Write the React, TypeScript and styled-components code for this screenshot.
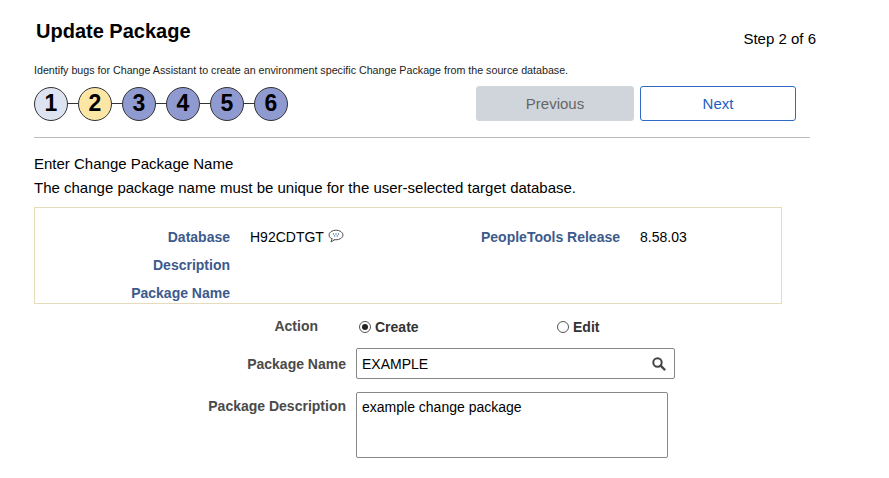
import React from "react";
import styled, { createGlobalStyle } from "styled-components";

const G = createGlobalStyle`
  body { margin: 0; font-family: Arial, "Liberation Sans", sans-serif; color: #000; background: #fff; }
`;
const Page = styled.div`width: 889px; height: 478px; position: relative; overflow: hidden;`;
const Header = styled.div`display: flex; justify-content: space-between; padding: 20px 0 0 36px; width: 780px;`;
const Title = styled.h1`margin: 0; font-size: 20px; font-weight: bold;`;
const StepText = styled.div`font-size: 15px; margin-top: 10px;`;
const Hint = styled.div`font-size: 10.7px; padding: 17px 0 0 34px; color: #222;`;
const NavRow = styled.div`display: flex; align-items: center; padding: 10px 0 0 34px; width: 762px;`;
const Steps = styled.div`display: flex; align-items: center; flex: 1;`;
const Circle = styled.div<{ $bg: string }>`
  width: 32px; height: 32px; border-radius: 50%; border: 1px solid #333; background: ${p => p.$bg};
  display: flex; align-items: center; justify-content: center; font-size: 23px; font-weight: bold;
`;
const Line = styled.div`width: 10px; height: 1px; background: #333;`;
const Btn = styled.button<{ $primary?: boolean }>`
  width: ${p => (p.$primary ? 156 : 158)}px; height: 35px; margin-left: ${p => (p.$primary ? 6 : 0)}px;
  font: 15px Arial, "Liberation Sans", sans-serif; border-radius: 3px;
  background: ${p => (p.$primary ? "#fff" : "#d0d5db")};
  color: ${p => (p.$primary ? "#1d5fc0" : "#666")};
  border: 1px solid ${p => (p.$primary ? "#2f6bc4" : "#d0d5db")};
`;
const Rule = styled.hr`margin: 16px 0 0 34px; width: 776px; border: 0; border-top: 1px solid #bbb;`;
const Para = styled.div`font-size: 15px; padding: 0 0 0 34px; line-height: 24px;`;
const Info = styled.div`margin: 7px 0 0 34px; width: 748px; height: 97px; border: 1px solid #e6dcbc; box-sizing: border-box;
  display: grid; grid-template-columns: 195px 230px 160px auto; grid-auto-rows: 28px; padding-top: 15px; align-items: center;`;
const Lbl = styled.div`font-size: 14px; font-weight: bold; color: #3c5a8c; text-align: right;`;
const Val = styled.div`font-size: 14px; padding-left: 20px; display: flex; align-items: flex-start;`;
const Form = styled.div`display: grid; grid-template-columns: 346px auto; row-gap: 13px; column-gap: 10px; margin-top: 8px; align-items: start;`;
const FLbl = styled.div`font-size: 14px; font-weight: bold; color: #4a4a4a; text-align: right; padding-top: 6px;`;
const Radios = styled.div`display: flex; font-size: 14px; font-weight: bold; color: #333; padding-top: 7px;`;
const Radio = styled.label<{ $w: number }>`display: flex; align-items: center; gap: 4px; width: ${p => p.$w}px; margin-left: 3px;`;
const Dot = styled.span<{ $on?: boolean }>`width: 12px; height: 12px; border-radius: 50%; border: 1px solid #555; display: inline-flex; align-items: center; justify-content: center; box-sizing: border-box;
  &::after { content: ""; width: 6px; height: 6px; border-radius: 50%; background: ${p => (p.$on ? "#222" : "transparent")}; }`;
const Input = styled.div`width: 319px; height: 31px; border: 1px solid #888; border-radius: 2px; box-sizing: border-box; display: flex; align-items: center; justify-content: space-between; padding: 0 8px 0 5px; font-size: 14px;`;
const Area = styled.div`width: 312px; height: 66px; border: 1px solid #888; border-radius: 2px; box-sizing: border-box; padding: 6px 5px; font-size: 14px;`;

export default function App() {
  const cols = ["#dde3f0", "#fbe6a6", "#8e9ad0", "#8e9ad0", "#8e9ad0", "#8e9ad0"];
  return (
    <Page>
      <G />
      <Header><Title>Update Package</Title><StepText>Step 2 of 6</StepText></Header>
      <Hint>Identify bugs for Change Assistant to create an environment specific Change Package from the source database.</Hint>
      <NavRow>
        <Steps>
          {cols.map((c, i) => (
            <React.Fragment key={i}>
              {i > 0 && <Line />}
              <Circle $bg={c}>{i + 1}</Circle>
            </React.Fragment>
          ))}
        </Steps>
        <Btn>Previous</Btn>
        <Btn $primary>Next</Btn>
      </NavRow>
      <Rule />
      <Para style={{ marginTop: 14 }}>Enter Change Package Name</Para>
      <Para>The change package name must be unique for the user-selected target database.</Para>
      <Info>
        <Lbl>Database</Lbl>
        <Val>H92CDTGT&nbsp;
          <svg width="16" height="14" viewBox="0 0 16 14"><ellipse cx="8" cy="6" rx="7" ry="4.8" fill="#fff" stroke="#555" /><path d="M4 10 L3 13 L7 10.5" fill="#fff" stroke="#555" /><g fill="#3a6fb0"><circle cx="5.5" cy="5" r=".7"/><circle cx="8" cy="5" r=".7"/><circle cx="10.5" cy="5" r=".7"/><circle cx="6.7" cy="7" r=".7"/><circle cx="9.3" cy="7" r=".7"/></g></svg>
        </Val>
        <Lbl>PeopleTools Release</Lbl>
        <Val>8.58.03</Val>
        <Lbl>Description</Lbl><Val /><Lbl /><Val />
        <Lbl>Package Name</Lbl>
      </Info>
      <Form>
        <FLbl style={{ marginRight: 28 }}>Action</FLbl>
        <Radios>
          <Radio $w={195}><Dot $on />Create</Radio>
          <Radio $w={60}><Dot />Edit</Radio>
        </Radios>
        <FLbl style={{ paddingTop: 8 }}>Package Name</FLbl>
        <Input>EXAMPLE
          <svg width="14" height="14" viewBox="0 0 14 14"><circle cx="5.5" cy="5.5" r="4.2" fill="none" stroke="#444" strokeWidth="2" /><path d="M8.6 8.6 L12.5 12.5" stroke="#444" strokeWidth="2.4" strokeLinecap="round" /></svg>
        </Input>
        <FLbl>Package Description</FLbl>
        <Area>example change package</Area>
      </Form>
    </Page>
  );
}
